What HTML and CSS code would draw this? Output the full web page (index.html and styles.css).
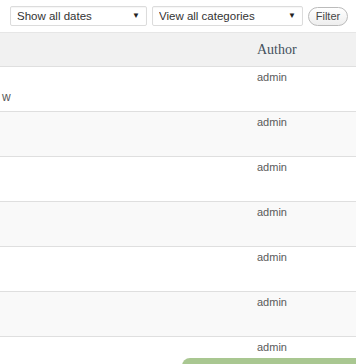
FILE: index.html
```html
<!DOCTYPE html>
<html lang="en">
<head>
    <meta charset="UTF-8">
    <title>Posts</title>
    <link rel="stylesheet" href="styles.css">
</head>
<body>

    <!-- filter bar -->
    <div class="tablenav">
        <label class="select-wrap dates">
            <select>
                <option>Show all dates</option>
            </select>
        </label>
        <label class="select-wrap cats">
            <select>
                <option>View all categories</option>
            </select>
        </label>
        <button class="button">Filter</button>
    </div>

    <!-- posts list -->
    <div class="posts">
        <div class="row head">
            <div class="cell"></div>
            <div class="cell author">Author</div>
        </div>
        <div class="row">
            <div class="cell title"><span class="cut">w</span></div>
            <div class="cell">admin</div>
        </div>
        <div class="row alt">
            <div class="cell title"></div>
            <div class="cell">admin</div>
        </div>
        <div class="row">
            <div class="cell title"></div>
            <div class="cell">admin</div>
        </div>
        <div class="row alt">
            <div class="cell title"></div>
            <div class="cell">admin</div>
        </div>
        <div class="row">
            <div class="cell title"></div>
            <div class="cell">admin</div>
        </div>
        <div class="row alt">
            <div class="cell title"></div>
            <div class="cell">admin</div>
        </div>
        <div class="row">
            <div class="cell title"></div>
            <div class="cell">admin</div>
        </div>
    </div>

    <div class="notice"></div>

</body>
</html>
```

FILE: styles.css
```css
body {
    margin: 0;
    background: #fff;
    font-family: "Liberation Sans", Arial, sans-serif;
    color: #5a5a5a;
    overflow: hidden;
}
.tablenav {
    height: 33px;
    display: flex;
    align-items: center;
    padding-left: 10px;
    box-sizing: border-box;
    border-bottom: 1px solid #e6e6e6;
}
.select-wrap {
    position: relative;
    display: block;
    height: 20px;
    margin-right: 5px;
}
.select-wrap.dates {
    width: 137px;
}
.select-wrap.cats {
    width: 151px;
}
.select-wrap select {
    appearance: none;
    -webkit-appearance: none;
    width: 100%;
    height: 20px;
    margin: 0;
    padding: 0 0 0 6px;
    border: 1px solid #dcdcdc;
    border-radius: 2px;
    background: #fff;
    box-shadow: inset 0 1px 1px rgba(0, 0, 0, 0.04);
    font-family: "Liberation Sans", Arial, sans-serif;
    font-size: 11.5px;
    color: #333;
}
.select-wrap::after {
    content: "\25BC";
    position: absolute;
    right: 7px;
    top: 5px;
    font-size: 8px;
    color: #222;
    pointer-events: none;
}
.button {
    width: 40px;
    height: 19px;
    padding: 0;
    border: 1px solid #bbb;
    border-radius: 10px;
    background: linear-gradient(#fff, #eee);
    font-family: "Liberation Sans", Arial, sans-serif;
    font-size: 11px;
    color: #464646;
}
.row {
    display: grid;
    grid-template-columns: 1fr 99px;
    height: 45px;
    box-sizing: border-box;
    border-top: 1px solid #dfdfdf;
}
.row.head {
    height: 33px;
    border-top: none;
    background: #f1f1f1;
    align-items: center;
}
.row.alt {
    background: #f9f9f9;
}
.cell {
    font-size: 11px;
    line-height: 13px;
    padding-top: 4px;
}
.head .cell {
    padding-top: 0;
}
.author {
    font-family: "Liberation Serif", "Times New Roman", serif;
    font-size: 14px;
    color: #44505c;
}
.cut {
    display: block;
    padding: 20px 0 0 2px;
    font-size: 12px;
}
.notice {
    position: fixed;
    left: 182px;
    right: 0;
    bottom: -6px;
    height: 12px;
    background: #a9c791;
    border-top-left-radius: 8px;
}
```
